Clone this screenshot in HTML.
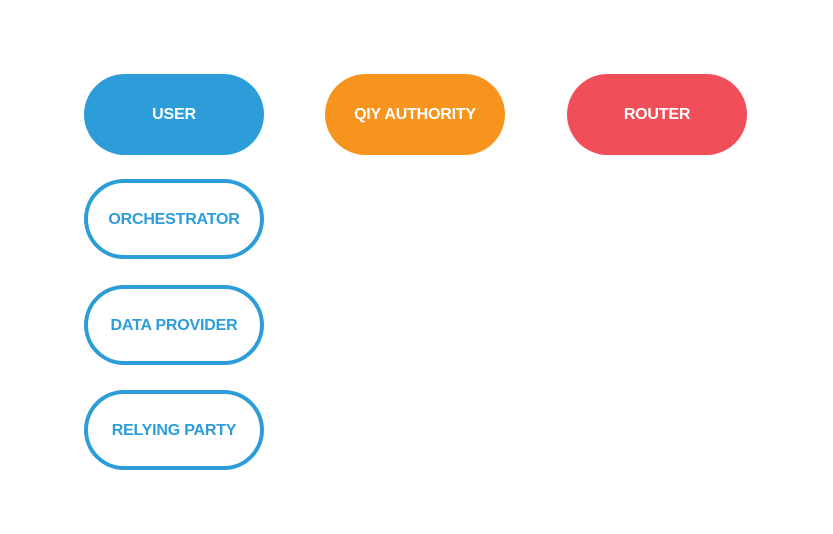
<!DOCTYPE html>
<html><head><style>
body{margin:0;width:833px;height:534px;background:#fff;font-family:"Liberation Sans",sans-serif;position:relative;overflow:hidden}
.p{position:absolute;width:180px;height:81px;border-radius:41px;box-sizing:border-box;display:flex;align-items:center;justify-content:center;font-weight:bold;font-size:16px;color:#fff;letter-spacing:-0.2px}
.o{background:#fff;border:4px solid #2c9dd8;color:#2c9dd8;height:80px;padding-top:2px}
</style></head><body>
<div class="p" style="left:84px;top:74px;background:#2c9dd8">USER</div>
<div class="p" style="left:325px;top:74px;background:#f7941e">QIY AUTHORITY</div>
<div class="p" style="left:567px;top:74px;background:#f04e58">ROUTER</div>
<div class="p o" style="left:84px;top:179px">ORCHESTRATOR</div>
<div class="p o" style="left:84px;top:285px">DATA PROVIDER</div>
<div class="p o" style="left:84px;top:390px">RELYING PARTY</div>
</body></html>
